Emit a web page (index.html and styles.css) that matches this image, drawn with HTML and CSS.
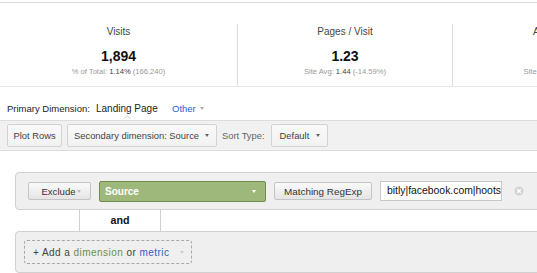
FILE: index.html
```html
<!DOCTYPE html>
<html>
<head>
<meta charset="utf-8">
<link rel="stylesheet" href="styles.css">
</head>
<body>
<div class="page">
  <div class="scorecard">
    <div class="metric m1">
      <div class="m-label">Visits</div>
      <div class="m-value">1,894</div>
      <div class="m-sub">% of Total: <span class="strong">1.14%</span> (166,240)</div>
    </div>
    <div class="metric m2">
      <div class="m-label">Pages / Visit</div>
      <div class="m-value">1.23</div>
      <div class="m-sub">Site Avg: <span class="strong">1.44</span> (-14.59%)</div>
    </div>
    <div class="metric m3">
      <div class="m-label">Avg. Time on Site</div>
      <div class="m-value">00:01:10</div>
      <div class="m-sub">Site Avg: <span class="strong">00:01:22</span> (-14.59%)</div>
    </div>
  </div>

  <div class="dimbar">
    <span class="dim-label">Primary Dimension:</span>
    <span class="dim-current">Landing Page<span class="notch"></span></span>
    <span class="dim-other">Other<span class="arrow grey"></span></span>
  </div>

  <div class="toolbar">
    <button class="btn">Plot Rows</button>
    <button class="btn btn-dd sec">Secondary dimension: Source<span class="arrow"></span></button>
    <span class="sort-label">Sort Type:</span>
    <button class="btn btn-dd def">Default<span class="arrow"></span></button>
  </div>

  <div class="filter">
    <div class="rule-box">
      <button class="mini exclude">Exclude<span class="arrow light"></span></button>
      <div class="green-dd"><span>Source</span><span class="arrow white"></span></div>
      <button class="mini match">Matching RegExp</button>
      <div class="input">bitly|facebook.com|hootsuite</div>
      <svg class="close" width="10" height="10" viewBox="0 0 10 10">
        <circle cx="5" cy="5" r="4.5" fill="#d4d4d4"/>
        <path d="M3.2 3.2 L6.8 6.8 M6.8 3.2 L3.2 6.8" stroke="#fff" stroke-width="1.3"/>
      </svg>
    </div>
    <div class="connector"><div class="and-tab">and</div></div>
    <div class="add-box">
      <div class="add-btn"><span class="add-text"><span class="plus">+ Add a</span> <span class="dimw">dimension</span> <span class="plus">or</span> <span class="metw">metric</span></span><span class="arrow faint"></span></div>
    </div>
  </div>
</div>
</body>
</html>
```

FILE: styles.css
```css
html, body {
  margin: 0;
  padding: 0;
  background: #fff;
  overflow: hidden;
}
body {
  font-family: "Liberation Sans", Arial, sans-serif;
  color: #333;
  width: 537px;
  height: 273px;
}
.page {
  width: 537px;
}

/* scorecard */
.scorecard {
  margin-top: 2px;
  border-top: 1px solid #d9d9d9;
  border-bottom: 1px solid #e6e6e6;
  padding-top: 21px;
  display: grid;
  grid-template-columns: 238px 215px 238px;
  width: 691px;
}
.metric {
  height: 62px;
  box-sizing: border-box;
  border-right: 1px solid #dcdcdc;
  text-align: center;
  padding-top: 2px;
}
.m3 { border-right: none; }
.m-label {
  font-size: 10px;
  line-height: 12px;
  color: #444;
}
.m-value {
  margin-top: 10px;
  font-size: 14px;
  line-height: 16px;
  font-weight: bold;
  color: #111;
}
.m-sub {
  margin-top: 3px;
  font-size: 7.6px;
  line-height: 9px;
  color: #999;
}
.m-sub .strong { color: #444; }

/* primary dimension bar */
.dimbar {
  height: 33px;
  box-sizing: border-box;
  padding: 16px 0 0 7px;
  font-size: 9.5px;
  line-height: 11px;
  display: flex;
  align-items: flex-start;
  color: #222;
}
.dim-label { width: 89px; }
.dim-current {
  position: relative;
  font-size: 10px;
  width: 76px;
  color: #222;
}
.notch {
  position: absolute;
  left: 27px;
  top: 12px;
  width: 0; height: 0;
  border-left: 4px solid transparent;
  border-right: 4px solid transparent;
  border-bottom: 4px solid #d6d6d6;
}
.notch::after {
  content: "";
  position: absolute;
  left: -3px;
  top: 1px;
  border-left: 3px solid transparent;
  border-right: 3px solid transparent;
  border-bottom: 3px solid #fff;
}
.dim-other {
  font-size: 9.5px;
  color: #2b5fcf;
  display: flex;
  align-items: center;
}

.arrow {
  display: inline-block;
  width: 0; height: 0;
  border-left: 2.5px solid transparent;
  border-right: 2.5px solid transparent;
  border-top: 3px solid #666;
}
.arrow.grey { border-top-color: #aaa; margin-left: 4px; }
.arrow.light { border-top-color: #bbb; margin-left: 1px; }
.arrow.white { border-top-color: #fff; }
.arrow.faint { border-top-color: #ccc; margin-left: 11px; }

/* toolbar */
.toolbar {
  height: 31px;
  box-sizing: border-box;
  background: #f1f1f1;
  border-top: 1px solid #dcdcdc;
  border-bottom: 1px solid #dcdcdc;
  display: flex;
  align-items: center;
  padding: 0 0 0 7px;
}
.btn {
  font-family: "Liberation Sans", Arial, sans-serif;
  font-size: 9.4px;
  color: #444;
  height: 23px;
  box-sizing: border-box;
  border: 1px solid #d2d2d2;
  border-radius: 2px;
  background: linear-gradient(#f9f9f9, #f2f2f2);
  padding: 0 6px;
  margin: 0 5px 0 0;
  display: flex;
  align-items: center;
}
.btn:first-child { width: 55px; justify-content: center; padding: 0; }
.btn.sec { width: 150px; justify-content: space-between; padding: 0 7px 0 6px; }
.btn.def { width: 57px; justify-content: space-between; padding: 0 7px 0 8px; }
.sort-label {
  font-size: 9.4px;
  color: #666;
  margin-right: 6px;
}

/* filter */
.filter {
  margin: 21px 0 0 15px;
  width: 560px;
}
.rule-box {
  height: 38px;
  box-sizing: border-box;
  background: #efefef;
  border: 1px solid #d0d0d0;
  border-radius: 4px;
  display: flex;
  align-items: center;
  padding-left: 12px;
}
.mini {
  font-family: "Liberation Sans", Arial, sans-serif;
  height: 18px;
  box-sizing: border-box;
  border: 1px solid #c4c4c4;
  border-radius: 2px;
  background: linear-gradient(#fafafa, #e4e4e4);
  color: #333;
  padding: 0;
  margin: 0;
  display: flex;
  align-items: center;
  justify-content: center;
}
.exclude {
  width: 63px;
  font-size: 9.6px;
  padding-left: 3px;
}
.green-dd {
  margin-left: 8px;
  width: 167px;
  height: 21px;
  box-sizing: border-box;
  background: #9db87a;
  border: 1px solid #6f8e4e;
  border-radius: 2px;
  display: flex;
  align-items: center;
  justify-content: space-between;
  padding: 0 9px 0 5px;
  color: #fff;
  font-weight: bold;
  font-size: 10px;
}
.match {
  margin-left: 8px;
  width: 98px;
  font-size: 9.9px;
}
.input {
  margin-left: 8px;
  width: 122px;
  height: 20px;
  box-sizing: border-box;
  background: #fff;
  border: 1px solid #c8c8c8;
  font-size: 10.4px;
  line-height: 17px;
  color: #111;
  padding-left: 6px;
  white-space: nowrap;
  overflow: hidden;
}
.close {
  margin-left: 12px;
  display: block;
}
.connector {
  height: 21px;
  padding-left: 64px;
}
.and-tab {
  width: 82px;
  height: 21px;
  box-sizing: border-box;
  border-left: 1px solid #d0d0d0;
  border-right: 1px solid #d0d0d0;
  background: #fff;
  text-align: center;
  font-weight: bold;
  font-size: 10.7px;
  line-height: 21px;
  color: #111;
}
.add-box {
  height: 42px;
  box-sizing: border-box;
  background: #efefef;
  border: 1px solid #d0d0d0;
  border-radius: 4px;
  padding: 8px 0 0 8px;
}
.add-btn {
  width: 168px;
  height: 24px;
  box-sizing: border-box;
  border: 1px dashed #a8a8a8;
  border-radius: 3px;
  display: flex;
  align-items: center;
  padding-left: 8px;
  font-size: 10px;
  letter-spacing: 0.45px;
}
.add-text { white-space: nowrap; }
.plus { color: #444; }
.dimw { color: #6f8c48; }
.metw { color: #2b62c8; }
```
